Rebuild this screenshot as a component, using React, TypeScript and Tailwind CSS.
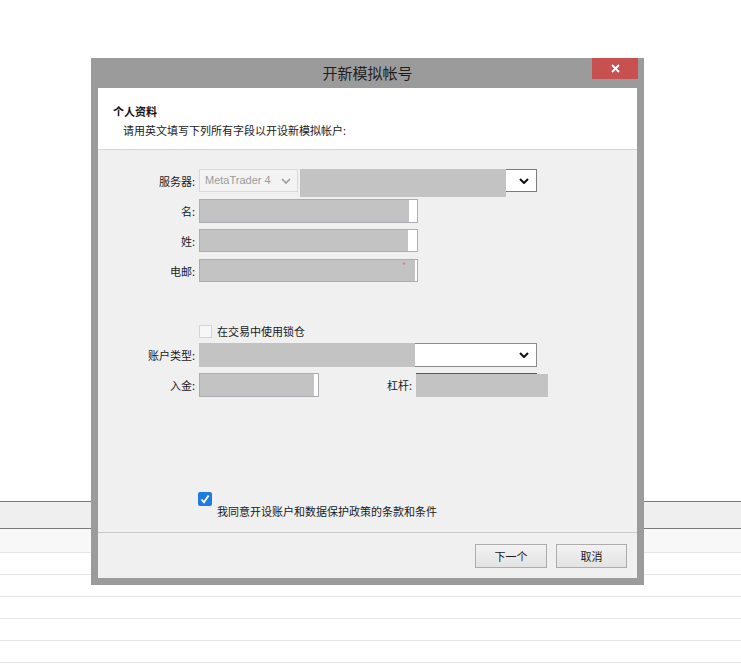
import React from "react";

function Chevron({ color = "#111", w = 2 }: { color?: string; w?: number }) {
  return (
    <svg width="10" height="6" viewBox="0 0 10 6" className="shrink-0">
      <path d="M1 1 L5 5 L9 1" fill="none" stroke={color} strokeWidth={w} />
    </svg>
  );
}

function Label({ children, w = "w-[97px]" }: { children: React.ReactNode; w?: string }) {
  return <div className={`${w} shrink-0 text-right text-[11px] leading-[14px] text-[#1a1a1a]`}>{children}</div>;
}

export default function App() {
  return (
    <div className="relative w-[741px] h-[666px] bg-white overflow-hidden font-['Noto_Sans_CJK_SC',sans-serif]">
      {/* background table */}
      <div className="flex flex-col">
        <div className="h-[501px]" />
        <div className="h-[28px] bg-[#efefef] border-y border-[#7a7a7a]" />
        <div className="h-[24px] bg-[#f8f8f8] border-b border-[#e6e6e6]" />
        <div className="h-[22px] border-b border-[#e6e6e6]" />
        <div className="h-[22px] border-b border-[#e6e6e6]" />
        <div className="h-[22px] border-b border-[#e6e6e6]" />
        <div className="h-[22px] border-b border-[#e6e6e6]" />
        <div className="h-[22px] border-b border-[#e6e6e6]" />
      </div>

      {/* dialog window */}
      <div className="absolute left-[91px] top-[58px] w-[553px] h-[527px] bg-[#9b9b9b] flex flex-col">
        <div className="relative h-[30px] flex items-center justify-center">
          <span className="text-[15px] leading-[18px] text-[#1f1f1f]">开新模拟帐号</span>
          <div className="absolute right-[6px] top-0 w-[46px] h-[21px] bg-[#c75050] flex items-center justify-center">
            <svg width="9" height="9" viewBox="0 0 9 9">
              <path d="M1 1 L8 8 M8 1 L1 8" stroke="#fff" strokeWidth="1.8" />
            </svg>
          </div>
        </div>

        <div className="mx-[7px] flex flex-col h-[490px]">
          {/* header */}
          <div className="h-[62px] bg-white border-b border-[#d5d5d5] pl-[15px] pt-[16px]">
            <div className="text-[11px] leading-[14px] font-bold text-[#111]">个人资料</div>
            <div className="mt-[5px] pl-[10px] text-[11px] leading-[14px] text-[#1a1a1a]">请用英文填写下列所有字段以开设新模拟帐户:</div>
          </div>

          {/* body */}
          <div className="h-[382px] bg-[#f0f0f0] pt-[19px] flex flex-col">
            {/* server */}
            <div className="flex items-center h-[23px]">
              <Label>服务器:</Label>
              <div className="ml-[4px] w-[99px] h-[23px] border border-[#dadada] bg-[#f3f3f3] flex items-center justify-between pl-[5px] pr-[6px]">
                <span className="font-['Liberation_Sans',sans-serif] text-[11px] text-[#9c9c9c]">MetaTrader 4</span>
                <Chevron color="#9a9a9a" w={1.6} />
              </div>
              <div className="relative ml-[2px] w-[237px] h-[23px] border border-[#7d7d7d] bg-white flex items-center justify-end pr-[7px]">
                <div className="absolute left-[-1px] top-[-1px] w-[206px] h-[28px] bg-[#c3c3c3]" />
                <Chevron />
              </div>
            </div>

            {/* first name */}
            <div className="flex items-center h-[24px] mt-[7px]">
              <Label>名:</Label>
              <div className="relative ml-[4px] w-[219px] h-[24px] border border-[#abadb3] bg-white">
                <div className="absolute left-0 top-0 w-[209px] h-full bg-[#c3c3c3]" />
              </div>
            </div>

            {/* last name */}
            <div className="flex items-center h-[23px] mt-[6px]">
              <Label>姓:</Label>
              <div className="relative ml-[4px] w-[219px] h-[23px] border border-[#abadb3] bg-white">
                <div className="absolute left-0 top-0 w-[208px] h-full bg-[#c3c3c3]" />
              </div>
            </div>

            {/* email */}
            <div className="flex items-center h-[23px] mt-[7px]">
              <Label>电邮:</Label>
              <div className="relative ml-[4px] w-[219px] h-[23px] border border-[#abadb3] bg-white">
                <div className="absolute left-0 top-0 w-[215px] h-full bg-[#c3c3c3]">
                  <span className="absolute left-[202px] top-[1px] text-[9px] leading-[10px] text-[#e07a7a]">*</span>
                </div>
              </div>
            </div>

            {/* hedge checkbox */}
            <div className="flex items-center h-[14px] mt-[42px] pl-[101px]">
              <div className="w-[13px] h-[13px] border border-[#d4d4d4] bg-[#f7f7f7]" />
              <span className="ml-[5px] text-[11px] leading-[14px] text-[#1a1a1a]">在交易中使用锁仓</span>
            </div>

            {/* account type */}
            <div className="flex items-center h-[24px] mt-[5px]">
              <Label>账户类型:</Label>
              <div className="relative ml-[4px] w-[338px] h-[24px] border border-[#8a8a8a] bg-white flex items-center justify-end pr-[7px]">
                <div className="absolute left-[-1px] top-[-1px] w-[216px] h-[24px] bg-[#c3c3c3]" />
                <Chevron />
              </div>
            </div>

            {/* deposit / leverage */}
            <div className="flex items-center h-[24px] mt-[6px]">
              <Label>入金:</Label>
              <div className="relative ml-[4px] w-[120px] h-[24px] border border-[#abadb3] bg-white">
                <div className="absolute left-0 top-0 w-[114px] h-full bg-[#c3c3c3]" />
              </div>
              <Label w="w-[93px]">杠杆:</Label>
              <div className="relative ml-[4px] w-[121px] h-[24px] border-t border-[#5a5a5a]">
                <div className="absolute left-0 top-0 w-[132px] h-[23px] bg-[#c3c3c3]" />
              </div>
            </div>

            {/* agreement */}
            <div className="flex mt-[95px] pl-[100px]">
              <div className="w-[14px] h-[14px] rounded-[2px] bg-[#1f7be0] flex items-center justify-center shrink-0">
                <svg width="10" height="10" viewBox="0 0 10 10">
                  <path d="M1.5 5.5 L4 8.2 L8.6 1.6" fill="none" stroke="#fff" strokeWidth="1.8" />
                </svg>
              </div>
              <span className="ml-[5px] mt-[12px] text-[11px] leading-[14px] text-[#1a1a1a]">我同意开设账户和数据保护政策的条款和条件</span>
            </div>
          </div>

          {/* footer */}
          <div className="h-[46px] bg-[#f0f0f0] border-t border-[#c9c9c9] flex justify-end items-start pt-[11px] pr-[10px] gap-[9px]">
            <button className="w-[72px] h-[24px] border border-[#acacac] bg-gradient-to-b from-[#f2f2f2] to-[#e3e3e3] text-[11px] leading-[14px] text-[#1a1a1a]">下一个</button>
            <button className="w-[71px] h-[24px] border border-[#acacac] bg-gradient-to-b from-[#f2f2f2] to-[#e3e3e3] text-[11px] leading-[14px] text-[#1a1a1a]">取消</button>
          </div>
        </div>
      </div>
    </div>
  );
}
